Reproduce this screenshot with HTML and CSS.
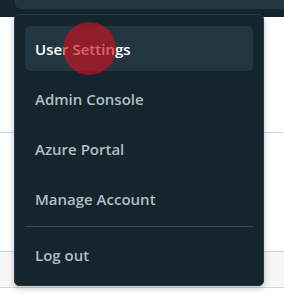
FILE: index.html
```html
<!DOCTYPE html>
<html lang="en">
<head>
    <meta charset="UTF-8">
    <meta name="viewport" content="width=device-width, initial-scale=1.0">
    <title>User Menu</title>
    <link rel="stylesheet" href="styles.css">
</head>
<body>
    <header class="top-bar">
        <div class="top-bar-panel"></div>
    </header>

    <main class="page">
        <div class="page-spacer"></div>
        <div class="accent-line"></div>
        <div class="page-gap"></div>
        <div class="table-row"></div>
    </main>

    <!-- dropdown opened from the account button -->
    <nav class="user-menu">
        <a class="menu-item active" href="#">User Settings</a>
        <a class="menu-item" href="#">Admin Console</a>
        <a class="menu-item" href="#">Azure Portal</a>
        <a class="menu-item" href="#">Manage Account</a>
        <div class="menu-divider"></div>
        <a class="menu-item" href="#">Log out</a>
    </nav>

    <div class="click-marker"></div>
</body>
</html>
```

FILE: styles.css
```css
body {
    margin: 0;
    background-color: #ffffff;
    font-family: "Open Sans", "Noto Sans", Arial, sans-serif;
}

/* Header */
.top-bar {
    height: 17px;
    background-color: #15252d;
}

.top-bar-panel {
    height: 9px;
    margin-left: 15px;
    background-color: #213640;
    border-bottom-left-radius: 6px;
}

/* Page behind the menu */
.page-spacer {
    height: 115px;
}

.accent-line {
    height: 1px;
    background-color: #c7dbe8;
}

.page-gap {
    height: 118px;
}

.table-row {
    height: 35px;
    background-color: #f7f7f7;
    border-top: 1px solid #d4d4d4;
    border-bottom: 1px solid #d4d4d4;
}

/* Dropdown menu */
.user-menu {
    position: absolute;
    top: 14px;
    left: 14px;
    width: 250px;
    box-sizing: border-box;
    display: flex;
    flex-direction: column;
    gap: 5px;
    padding: 11px 10px 8px 10px;
    background-color: #14252d;
    border: 1px solid #2b3c45;
    border-radius: 5px;
    box-shadow: 0 2px 6px rgba(0, 0, 0, 0.25);
}

.menu-item {
    display: flex;
    align-items: center;
    height: 45px;
    padding-left: 10px;
    border-radius: 5px;
    color: #b1bec6;
    font-size: 15px;
    font-weight: 600;
    text-decoration: none;
}

.menu-item.active {
    background-color: #213640;
    color: #ffffff;
}

.menu-divider {
    height: 1px;
    background-color: #34464f;
}

/* Click highlight from the recording */
.click-marker {
    position: absolute;
    top: 22px;
    left: 63px;
    width: 53px;
    height: 53px;
    border-radius: 50%;
    background-color: rgba(200, 16, 30, 0.66);
}
```
